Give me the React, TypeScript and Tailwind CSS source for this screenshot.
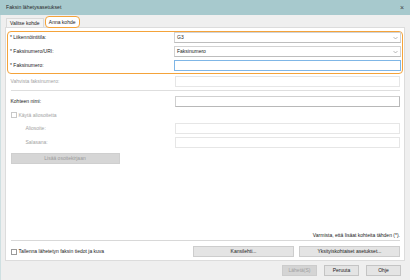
import React from "react";

const Chevron = () => (
  <svg width="5" height="4" viewBox="0 0 5 4" className="shrink-0">
    <path d="M0.5 1 L2.5 3 L4.5 1" fill="none" stroke="#8a8a8a" strokeWidth="0.6" />
  </svg>
);

const Label = ({ children, dim, indent }: { children: React.ReactNode; dim?: boolean; indent?: boolean }) => (
  <div className={`w-[164px] shrink-0 ${indent ? "pl-[15px]" : ""} ${dim ? "text-[#a3a3a3]" : "text-[#222]"}`}>{children}</div>
);

export default function App() {
  return (
    <div
      className="w-[410px] h-[280px] bg-[#efefef] flex flex-col overflow-hidden text-[5px] leading-none"
      style={{ fontFamily: '"Liberation Sans", Arial, sans-serif' }}
    >
      {/* Title bar */}
      <div className="h-[15px] shrink-0 bg-[#a7c9cd] flex items-center justify-between pl-[6px] pr-[6px] text-[#2a2a2a]">
        <span className="text-[5.2px]">Faksin lähetysasetukset</span>
        <span className="text-[7px] text-[#444]">×</span>
      </div>

      <div className="flex-1 flex flex-col pl-[4px] pr-[5px] border-l border-[#cfe0e2]">
        {/* Tabs */}
        <div className="h-[12px] flex items-end pl-[1px]">
          <div className="h-[9px] px-[3px] flex items-center bg-[#f4f4f4] border border-b-0 border-[#dadada] text-[#222]">Valitse kohde</div>
          <div className="h-[12px] w-[35px] ml-[1px] flex items-center justify-center bg-white border-[1.5px] border-[#f4a33a] rounded-[4px] text-[#222] relative top-[1px]">Anna kohde</div>
        </div>

        {/* Panel */}
        <div className="h-[234px] bg-white border border-[#dcdcdc] flex flex-col pl-[1px] pr-[1px] pt-[3px] pb-[3px]">
          {/* Orange box */}
          <div className="border-[1.5px] border-[#f4a33a] rounded-[4px] pl-[2px] pr-[1.5px] pb-[2px] flex flex-col gap-[3px]">
            <div className="h-[11px] flex items-center">
              <Label>* Liikennöintitila:</Label>
              <div className="flex-1 h-[11px] bg-white border border-[#d2d2d2] border-b-[#bdbdbd] flex items-center justify-between pl-[2px] pr-[2px] text-[#222]">
                <span>G3</span>
                <Chevron />
              </div>
            </div>
            <div className="h-[11px] flex items-center">
              <Label>* Faksinumero/URI:</Label>
              <div className="flex-1 h-[11px] bg-white border border-[#d2d2d2] border-b-[#bdbdbd] flex items-center justify-between pl-[2px] pr-[2px] text-[#222]">
                <span>Faksinumero</span>
                <Chevron />
              </div>
            </div>
            <div className="h-[11px] flex items-center">
              <Label>* Faksinumero:</Label>
              <div className="flex-1 h-[11px] bg-white border border-[#7fb6e6]" />
            </div>
          </div>

          <div className="pl-[3.5px] pr-[3px] flex flex-col flex-1">
            <div className="mt-[2px] h-[11px] flex items-center">
              <Label dim>Vahvista faksinumero:</Label>
              <div className="flex-1 h-[11px] bg-white border border-[#e6e6e6]" />
            </div>
            <div className="mt-[3px] h-px bg-[#dedede]" />
            <div className="mt-[5px] h-[11px] flex items-center">
              <Label>Kohteen nimi:</Label>
              <div className="flex-1 h-[11px] bg-white border border-[#d0d0d0] border-b-[#b8b8b8] border-r-[#b8b8b8]" />
            </div>
            <div className="mt-[4px] h-[8px] flex items-center gap-[2px] text-[#a3a3a3]">
              <div className="w-[6px] h-[6px] border border-[#c8c8c8] bg-white" />
              <span>Käytä aliosoitetta</span>
            </div>
            <div className="mt-[4px] h-[11px] flex items-center">
              <Label dim indent>Aliosoite:</Label>
              <div className="flex-1 h-[11px] bg-white border border-[#e6e6e6]" />
            </div>
            <div className="mt-[3px] h-[11px] flex items-center">
              <Label dim indent>Salasana:</Label>
              <div className="flex-1 h-[11px] bg-white border border-[#e6e6e6]" />
            </div>
            <div className="mt-[5px] h-[11px] w-[109px] bg-[#d6d6d6] border border-[#cfcfcf] flex items-center justify-center text-[#9a9a9a]">
              Lisää osoitekirjaan
            </div>

            <div className="flex-1" />
            <div className="flex justify-end text-[#222] h-[6px] items-center">Varmista, että lisäat kohteita tähden (*).</div>
            <div className="mt-[2px] h-px bg-[#d8d8d8]" />
            <div className="mt-[5px] h-[11px] flex items-center">
              <div className="flex items-center gap-[2px] text-[#222] flex-1">
                <div className="w-[6px] h-[6px] border border-[#9a9a9a] bg-white" />
                <span>Tallenna lähetetyn faksin tiedot ja kuva</span>
              </div>
              <div className="w-[101px] h-[11px] bg-[#e4e4e4] border border-[#cdcdcd] flex items-center justify-center text-[#222]">Kansilehti...</div>
              <div className="ml-[5px] w-[101px] h-[11px] bg-[#e4e4e4] border border-[#cdcdcd] flex items-center justify-center text-[#222]">Yksityiskohtaiset asetukset...</div>
            </div>
          </div>
        </div>

        {/* Bottom buttons */}
        <div className="mt-[4px] flex justify-end gap-[7px] pr-[4px]">
          <div className="w-[35px] h-[11px] bg-[#d4d4d4] border border-[#cccccc] flex items-center justify-center text-[#a0a0a0]">Lähetä(S)</div>
          <div className="w-[35px] h-[11px] bg-[#e4e4e4] border border-[#c4c4c4] flex items-center justify-center text-[#222]">Peruuta</div>
          <div className="w-[35px] h-[11px] bg-[#e4e4e4] border border-[#c4c4c4] flex items-center justify-center text-[#222]">Ohje</div>
        </div>
      </div>
    </div>
  );
}
